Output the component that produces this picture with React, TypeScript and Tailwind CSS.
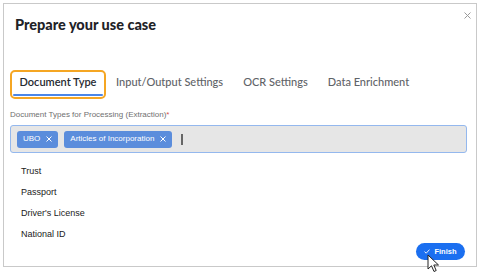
import React from 'react'

const options = ['Trust', 'Passport', "Driver's License", 'National ID']
const chips = ['UBO', 'Articles of Incorporation']

function Chip({ label }: { label: string }) {
  return (
    <span className="flex h-[17px] items-center gap-[6px] rounded-[3px] bg-[#5b8ddc] px-[6px] text-[8px] text-white">
      {label}
      <svg width="6" height="6" viewBox="0 0 6 6" className="stroke-white">
        <path d="M0.5 0.5L5.5 5.5M5.5 0.5L0.5 5.5" strokeWidth="1" />
      </svg>
    </span>
  )
}

function Pointer() {
  return (
    <svg width="14" height="19" viewBox="0 0 14 19" className="absolute left-[427px] top-[254px]">
      <path
        d="M1 1 L1 15 L4.5 11.8 L7 17.5 L9.2 16.5 L6.8 11 L11.5 11 Z"
        fill="#ffffff"
        stroke="#222"
        strokeWidth="1"
        strokeLinejoin="round"
      />
    </svg>
  )
}

export default function App() {
  return (
    <div className="relative h-[276px] w-[480px] bg-white font-['Liberation_Sans',Arial,sans-serif]">
      <div className="ml-[3px] pt-[3px]">
        <div className="relative flex h-[264px] w-[474px] flex-col border border-[#c9c9c9] bg-white">
          {/* close */}
          <svg width="7" height="7" viewBox="0 0 7 7" className="absolute right-[5px] top-[8px] stroke-[#9a9a9a]">
            <path d="M0.5 0.5L6.5 6.5M6.5 0.5L0.5 6.5" strokeWidth="1" />
          </svg>

          <h1 className="pl-[11px] pt-[10px] font-['Lato',sans-serif] text-[14.5px] font-black leading-[22px] text-[#1f2328]">
            Prepare your use case
          </h1>

          {/* tabs */}
          <div className="mt-[34px] flex items-start pl-[6px] font-['Lato',sans-serif] text-[11px] leading-[14px]">
            <div className="relative flex h-[29px] w-[96px] justify-center rounded-[5px] border-2 border-[#f5a623] pt-[3px] font-semibold text-[#262a30]">
              Document Type
              <span className="absolute bottom-[1px] left-[1px] right-[1px] h-[2px] rounded-full bg-[#4a86e8]" />
            </div>
            <div className="pl-[10px] pr-[20px] pt-[5px] font-medium text-[#5f6368]">Input/Output Settings</div>
            <div className="pr-[20px] pt-[5px] font-medium text-[#5f6368]">OCR Settings</div>
            <div className="pt-[5px] font-medium text-[#5f6368]">Data Enrichment</div>
          </div>

          {/* field */}
          <div className="mt-[11px] pl-[6px] text-[8px] leading-[10px] text-[#707070]">
            Document Types for Processing (Extraction)<span className="text-[#d9534f]">*</span>
          </div>
          <div className="ml-[6px] mt-[5px] flex h-[28px] w-[457px] items-center gap-[6px] rounded-[3px] border border-[#94b8ee] bg-[#e6e6e6] pl-[6px]">
            {chips.map(c => (
              <Chip key={c} label={c} />
            ))}
            <span className="ml-[3px] h-[11px] w-[2px] bg-[#666]" />
          </div>

          {/* options */}
          <ul className="mt-[8px] flex flex-col pl-[17px] text-[9px] text-[#222]">
            {options.map(o => (
              <li key={o} className="leading-[21px]">
                {o}
              </li>
            ))}
          </ul>

          <div className="-mt-[2px] flex justify-end pr-[11px]">
            <button className="flex h-[17px] w-[49px] items-center justify-center gap-[4px] rounded-full bg-[#1b6ff0] text-[7.5px] font-bold text-white">
              <svg width="6" height="5" viewBox="0 0 6 5" className="stroke-white" fill="none">
                <path d="M0.5 2.6L2.2 4.2L5.5 0.6" strokeWidth="0.9" />
              </svg>
              Finish
            </button>
          </div>
        </div>
      </div>
      <Pointer />
    </div>
  )
}
